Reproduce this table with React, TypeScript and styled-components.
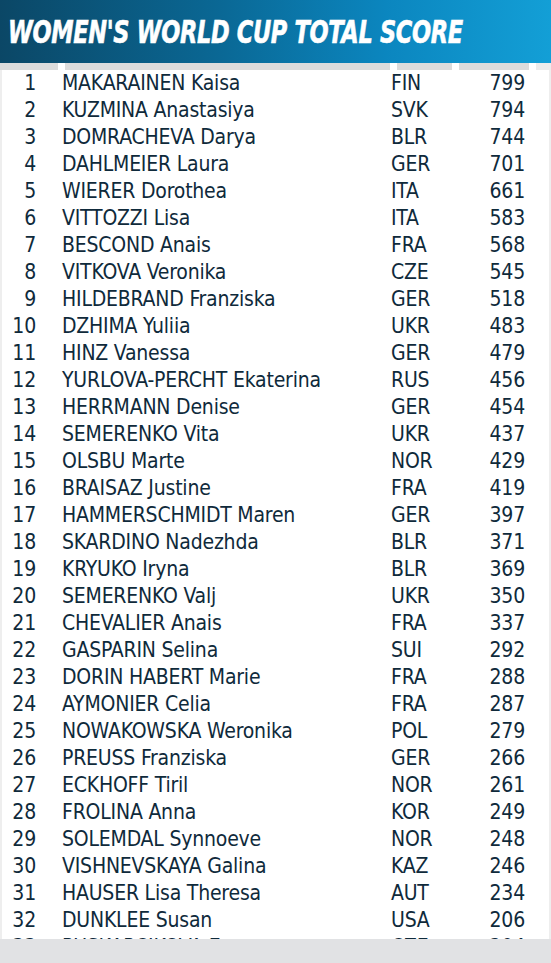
import styled, { createGlobalStyle } from 'styled-components'

const GlobalStyle = createGlobalStyle`
  body {
    margin: 0;
    background: #e1e2e4;
  }
`

type Entry = { name: string; country: string; score: number }

const standings: Entry[] = [
  { name: 'MAKARAINEN Kaisa', country: 'FIN', score: 799 },
  { name: 'KUZMINA Anastasiya', country: 'SVK', score: 794 },
  { name: 'DOMRACHEVA Darya', country: 'BLR', score: 744 },
  { name: 'DAHLMEIER Laura', country: 'GER', score: 701 },
  { name: 'WIERER Dorothea', country: 'ITA', score: 661 },
  { name: 'VITTOZZI Lisa', country: 'ITA', score: 583 },
  { name: 'BESCOND Anais', country: 'FRA', score: 568 },
  { name: 'VITKOVA Veronika', country: 'CZE', score: 545 },
  { name: 'HILDEBRAND Franziska', country: 'GER', score: 518 },
  { name: 'DZHIMA Yuliia', country: 'UKR', score: 483 },
  { name: 'HINZ Vanessa', country: 'GER', score: 479 },
  { name: 'YURLOVA-PERCHT Ekaterina', country: 'RUS', score: 456 },
  { name: 'HERRMANN Denise', country: 'GER', score: 454 },
  { name: 'SEMERENKO Vita', country: 'UKR', score: 437 },
  { name: 'OLSBU Marte', country: 'NOR', score: 429 },
  { name: 'BRAISAZ Justine', country: 'FRA', score: 419 },
  { name: 'HAMMERSCHMIDT Maren', country: 'GER', score: 397 },
  { name: 'SKARDINO Nadezhda', country: 'BLR', score: 371 },
  { name: 'KRYUKO Iryna', country: 'BLR', score: 369 },
  { name: 'SEMERENKO Valj', country: 'UKR', score: 350 },
  { name: 'CHEVALIER Anais', country: 'FRA', score: 337 },
  { name: 'GASPARIN Selina', country: 'SUI', score: 292 },
  { name: 'DORIN HABERT Marie', country: 'FRA', score: 288 },
  { name: 'AYMONIER Celia', country: 'FRA', score: 287 },
  { name: 'NOWAKOWSKA Weronika', country: 'POL', score: 279 },
  { name: 'PREUSS Franziska', country: 'GER', score: 266 },
  { name: 'ECKHOFF Tiril', country: 'NOR', score: 261 },
  { name: 'FROLINA Anna', country: 'KOR', score: 249 },
  { name: 'SOLEMDAL Synnoeve', country: 'NOR', score: 248 },
  { name: 'VISHNEVSKAYA Galina', country: 'KAZ', score: 246 },
  { name: 'HAUSER Lisa Theresa', country: 'AUT', score: 234 },
  { name: 'DUNKLEE Susan', country: 'USA', score: 206 },
  { name: 'PUSKARCIKOVA Eva', country: 'CZE', score: 204 },
]

const App = () => {
  return (
    <>
      <GlobalStyle />
      <StyledPage>
        <StyledHeader>
          <StyledTitle>WOMEN'S WORLD CUP TOTAL SCORE</StyledTitle>
        </StyledHeader>
        <StyledColumnBar>
          <StyledColumnCell />
          <StyledColumnCell />
          <StyledColumnCell />
          <StyledColumnCell />
          <StyledColumnCell faded />
        </StyledColumnBar>
        <StyledTable>
          {standings.map((item, index) => (
            <StyledRow key={item.name}>
              <StyledRank>{index + 1}</StyledRank>
              <span>{item.name}</span>
              <span>{item.country}</span>
              <StyledScore>{item.score}</StyledScore>
            </StyledRow>
          ))}
        </StyledTable>
      </StyledPage>
    </>
  )
}

export default App

const StyledPage = styled.div`
  width: 551px;
  height: 963px;
  overflow: hidden;
  background: #e1e2e4;
`

const StyledHeader = styled.header`
  height: 63px;
  display: flex;
  align-items: center;
  padding-left: 8px;
  box-sizing: border-box;
  overflow: hidden;
  background: linear-gradient(90deg, #0b4766 0%, #0a6895 40%, #0b86bf 70%, #139fd6 100%);
`

const StyledTitle = styled.h1`
  margin: 0;
  margin-top: 1px;
  font-family: 'DejaVu Sans Condensed', 'DejaVu Sans', sans-serif;
  font-weight: 700;
  font-style: italic;
  font-size: 32px;
  letter-spacing: -0.4px;
  color: #fff;
  white-space: nowrap;
  -webkit-text-stroke: 0.6px #fff;
  transform: scaleX(0.78);
  transform-origin: left center;
`

const StyledColumnBar = styled.div`
  height: 7px;
  display: grid;
  grid-template-columns: 58px 325px 55px 70px 1fr;
  column-gap: 7px;
  background: #fff;
`

const StyledColumnCell = styled.div<{ faded?: boolean }>`
  background: ${p => (p.faded ? '#ececec' : '#dcdcdc')};
`

const StyledTable = styled.div`
  height: 869px;
  overflow: hidden;
  background: #fff;
  border-left: 2px solid #eeeeee;
  border-right: 2px solid #eeeeee;
  box-sizing: border-box;
`

const StyledRow = styled.div`
  height: 27px;
  display: grid;
  grid-template-columns: 34px 303px 54px 54px;
  column-gap: 26px;
  align-items: start;
  font-family: 'DejaVu Sans Condensed', 'DejaVu Sans', sans-serif;
  font-size: 21px;
  letter-spacing: -0.2px;
  line-height: 27px;
  color: #0f2a3b;
  white-space: nowrap;
`

const StyledRank = styled.span`
  text-align: right;
`

const StyledScore = styled.span`
  text-align: right;
`
